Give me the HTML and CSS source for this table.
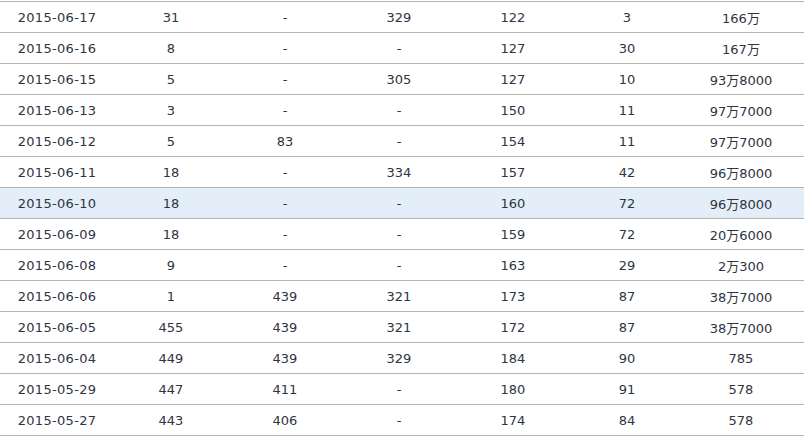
FILE: index.html
```html
<!DOCTYPE html>
<html>
<head>
<meta charset="utf-8">
<link rel="stylesheet" href="styles.css">
</head>
<body>
<div class="table">
  <div class="row"><span class="date">2015-06-17</span><span>31</span><span>-</span><span>329</span><span>122</span><span>3</span><span>166万</span></div>
  <div class="row"><span class="date">2015-06-16</span><span>8</span><span>-</span><span>-</span><span>127</span><span>30</span><span>167万</span></div>
  <div class="row"><span class="date">2015-06-15</span><span>5</span><span>-</span><span>305</span><span>127</span><span>10</span><span>93万8000</span></div>
  <div class="row"><span class="date">2015-06-13</span><span>3</span><span>-</span><span>-</span><span>150</span><span>11</span><span>97万7000</span></div>
  <div class="row"><span class="date">2015-06-12</span><span>5</span><span>83</span><span>-</span><span>154</span><span>11</span><span>97万7000</span></div>
  <div class="row"><span class="date">2015-06-11</span><span>18</span><span>-</span><span>334</span><span>157</span><span>42</span><span>96万8000</span></div>
  <div class="row hl"><span class="date">2015-06-10</span><span>18</span><span>-</span><span>-</span><span>160</span><span>72</span><span>96万8000</span></div>
  <div class="row"><span class="date">2015-06-09</span><span>18</span><span>-</span><span>-</span><span>159</span><span>72</span><span>20万6000</span></div>
  <div class="row"><span class="date">2015-06-08</span><span>9</span><span>-</span><span>-</span><span>163</span><span>29</span><span>2万300</span></div>
  <div class="row"><span class="date">2015-06-06</span><span>1</span><span>439</span><span>321</span><span>173</span><span>87</span><span>38万7000</span></div>
  <div class="row"><span class="date">2015-06-05</span><span>455</span><span>439</span><span>321</span><span>172</span><span>87</span><span>38万7000</span></div>
  <div class="row"><span class="date">2015-06-04</span><span>449</span><span>439</span><span>329</span><span>184</span><span>90</span><span>785</span></div>
  <div class="row"><span class="date">2015-05-29</span><span>447</span><span>411</span><span>-</span><span>180</span><span>91</span><span>578</span></div>
  <div class="row"><span class="date">2015-05-27</span><span>443</span><span>406</span><span>-</span><span>174</span><span>84</span><span>578</span></div>
</div>
</body>
</html>
```
FILE: styles.css
```css
html, body {
  margin: 0;
  padding: 0;
  background: #ffffff;
}
body {
  padding-top: 1px;
  font-family: "DejaVu Sans", Verdana, "Noto Sans CJK SC", sans-serif;
  font-size: 13px;
  color: #30343f;
}
.table {
  width: 804px;
  border-top: 1px solid #b4b4b4;
}
.row {
  display: grid;
  grid-template-columns: repeat(6, 114px) 120px;
  height: 30px;
  border-bottom: 1px solid #b4b4b4;
  align-items: center;
}
.row span {
  text-align: center;
}
.row .date {
  letter-spacing: 0.3px;
}
.row span:last-child {
  padding-right: 6px;
}
.row.hl {
  background: #e3eef8;
}
```
